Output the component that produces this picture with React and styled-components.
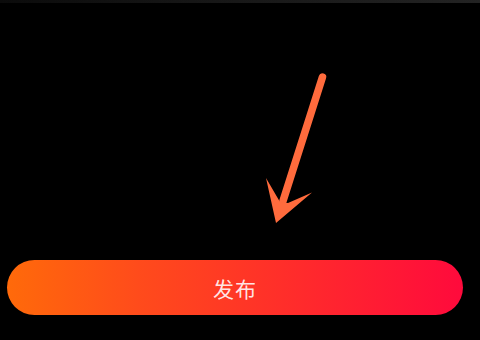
import React from 'react'
import styled, { createGlobalStyle } from 'styled-components'

const Global = createGlobalStyle`
  html, body {
    margin: 0;
    padding: 0;
    background: #000;
  }
  body {
    font-family: "Noto Sans CJK SC", "Noto Sans", sans-serif;
  }
`

const Screen = styled.div`
  width: 480px;
  height: 340px;
  display: flex;
  flex-direction: column;
  background: #000;
  overflow: hidden;
`

const TopEdge = styled.div`
  height: 3px;
  flex: none;
  background: linear-gradient(90deg, #0b0b0b 0%, #161616 40%, #232323 100%);
`

const Stage = styled.div`
  flex: none;
  height: 257px;
`

const PublishBar = styled.div`
  flex: none;
  padding: 0 17px 0 7px;
`

const PublishButton = styled.button`
  width: 100%;
  height: 55px;
  border: 0;
  border-radius: 28px;
  background: linear-gradient(90deg, #ff6a0a 0%, #ff4a1c 30%, #ff2a2c 65%, #ff0a3c 100%);
  color: rgba(255, 240, 240, 0.95);
  font-family: "Noto Sans CJK SC", "Noto Sans", sans-serif;
  font-size: 21px;
  letter-spacing: 1px;
  display: flex;
  align-items: center;
  justify-content: center;
  padding: 0;
  cursor: pointer;
`

// hand-drawn pointer arrow, page coordinates
const Arrow = () => (
  <svg width="480" height="257" viewBox="0 3 480 257">
    <line x1="322.5" y1="77" x2="283" y2="201" stroke="#ff6b3d" strokeWidth="7.5" strokeLinecap="round" />
    <polygon points="266,178 280,202 288,203 312,192.5 276,223" fill="#ff6b3d" />
  </svg>
)

export default function App() {
  return (
    <Screen>
      <Global />
      <TopEdge />
      <Stage>
        <Arrow />
      </Stage>
      <PublishBar>
        <PublishButton>发布</PublishButton>
      </PublishBar>
    </Screen>
  )
}
